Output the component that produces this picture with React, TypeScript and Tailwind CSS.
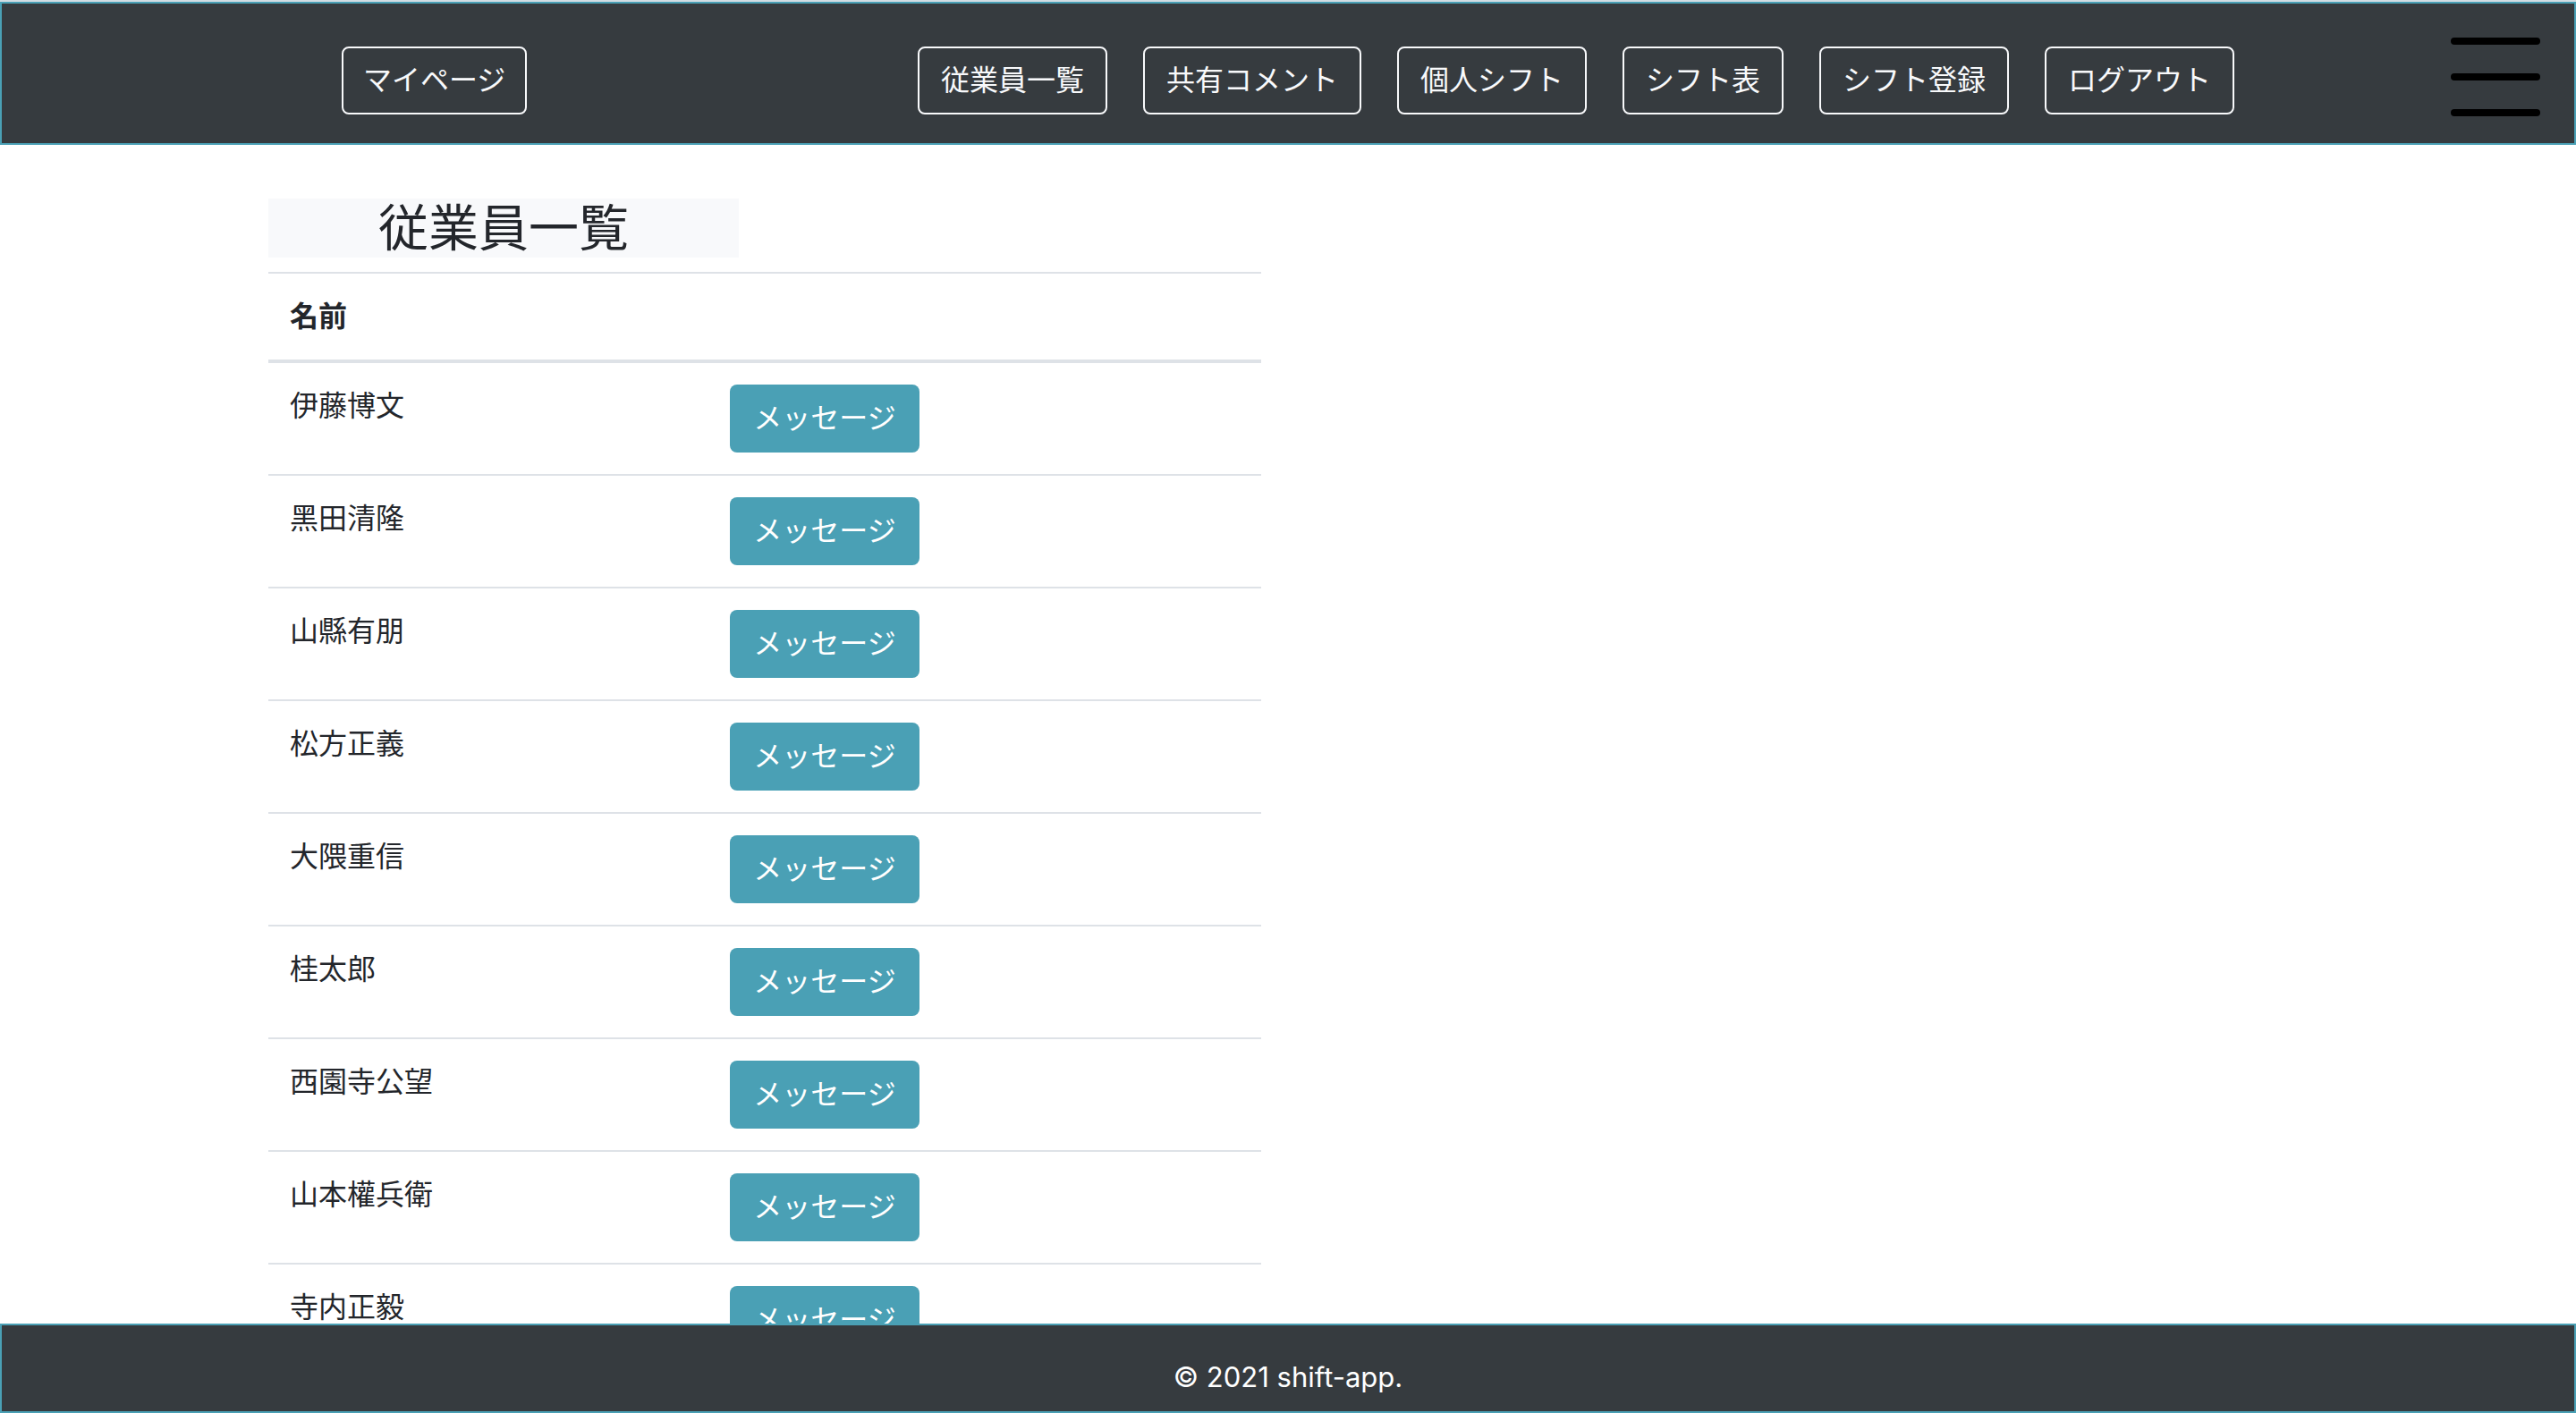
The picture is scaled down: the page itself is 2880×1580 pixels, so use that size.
const links = ['従業員一覧', '共有コメント', '個人シフト', 'シフト表', 'シフト登録', 'ログアウト'];

const employees = [
  '伊藤博文',
  '黑田清隆',
  '山縣有朋',
  '松方正義',
  '大隈重信',
  '桂太郎',
  '西園寺公望',
  '山本權兵衛',
  '寺内正毅',
];

function NavButton({ label, padding = 'px-6' }: { label: string; padding?: string }) {
  return (
    <a
      href="#"
      className={`block whitespace-nowrap rounded-lg border-2 border-[#f8f9fb] py-3 text-[32px] leading-[48px] text-[#f8f9fb] ${padding}`}
    >
      {label}
    </a>
  );
}

function Header() {
  return (
    <header className="shrink-0 border-t-2 border-[#d3dce2]">
      <div className="flex items-start border-2 border-[#4aa0b5] bg-[#363b3f] pt-10 pr-[38px] pb-[30px] pl-[380px]">
        <div className="mt-2">
          <NavButton label="マイページ" padding="px-[22px]" />
        </div>
        <nav className="mt-2 mr-[242px] ml-auto flex gap-10">
          {links.map((label) => (
            <NavButton key={label} label={label} />
          ))}
        </nav>
        <button type="button" aria-label="メニュー" className="-mt-0.5 flex w-[100px] flex-col gap-8">
          <span className="h-2 w-full rounded bg-black" />
          <span className="h-2 w-full rounded bg-black" />
          <span className="h-2 w-full rounded bg-black" />
        </button>
      </div>
    </header>
  );
}

function EmployeeTable() {
  return (
    <table className="w-full table-fixed border-separate border-spacing-0 text-left text-[32px] leading-[48px]">
      <colgroup>
        <col className="w-[492px]" />
        <col />
      </colgroup>
      <thead>
        <tr>
          <th scope="col" className="border-t-2 border-b-4 border-[#dee2e7] p-6 font-bold">
            名前
          </th>
          <td className="border-t-2 border-b-4 border-[#dee2e7] p-6" />
        </tr>
      </thead>
      <tbody>
        {employees.map((name) => (
          <tr key={name} className="group">
            <td className="border-b-2 border-[#dee2e7] p-6 align-top group-last:border-b-0">{name}</td>
            <td className="border-b-2 border-[#dee2e7] p-6 align-top group-last:border-b-0">
              <button type="button" className="block w-[212px] rounded-lg bg-[#4aa0b5] py-3.5 text-center text-white">
                メッセージ
              </button>
            </td>
          </tr>
        ))}
      </tbody>
    </table>
  );
}

export default function App() {
  return (
    <div
      lang="ja"
      className="flex h-screen flex-col bg-white font-[Inter,'Noto_Sans_CJK_JP',sans-serif] text-[#23262b]"
    >
      <Header />
      <main className="min-h-0 flex-1 overflow-y-auto [scrollbar-width:none]">
        <div className="mx-auto max-w-[2280px] pt-[60px]">
          <section className="w-1/2 pr-[30px]">
            <h1 className="mb-4 w-[526px] bg-[#f8f9fb] text-center text-[56px] leading-[66px] font-normal">
              従業員一覧
            </h1>
            <EmployeeTable />
          </section>
        </div>
      </main>
      <footer className="shrink-0 border-2 border-[#4aa0b5] bg-[#363b3f] pt-[34px] pb-[14px] text-center text-[31px] leading-[48px] text-white">
        © 2021 shift-app.
      </footer>
    </div>
  );
}
